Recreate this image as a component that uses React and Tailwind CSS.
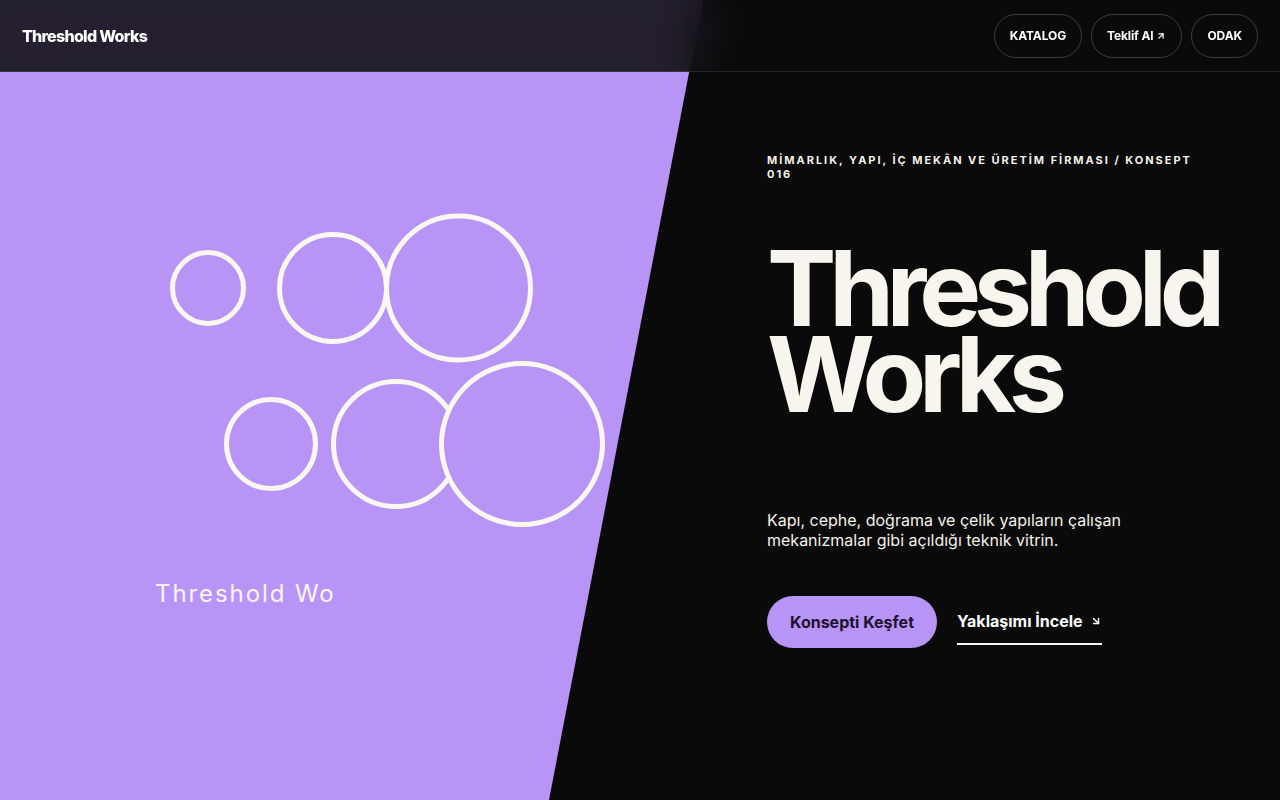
import { ArrowUpRight, ArrowDownRight } from 'lucide-react';

const NAV = [
  { label: 'KATALOG' },
  { label: 'Teklif Al', external: true },
  { label: 'ODAK' },
];

// circle rig: two rows, each ring 125px apart
const RINGS = [
  { cx: 40, cy: 76, r: 35.5 },
  { cx: 165, cy: 76, r: 53.5 },
  { cx: 290.5, cy: 76, r: 72 },
  { cx: 103, cy: 232, r: 44.5 },
  { cx: 228, cy: 232, r: 62.5 },
  { cx: 354, cy: 232, r: 80.5 },
];

function Header() {
  return (
    <header className="absolute inset-x-0 top-0 z-10 flex h-[72px] items-center justify-between border-b border-white/10 bg-[#0a0a0a]/85 px-[22px] backdrop-blur-xl">
      <a className="text-[16px] font-extrabold tracking-[-0.045em] text-white">Threshold Works</a>
      <nav className="flex items-center gap-[9px]">
        {NAV.map((item) => (
          <a
            key={item.label}
            className="flex h-[44px] items-center gap-[3px] rounded-full border border-white/20 px-[15px] text-[12px] font-bold tracking-[-0.01em] text-white"
          >
            {item.label}
            {item.external && <ArrowUpRight className="h-[10px] w-[10px]" strokeWidth={3} />}
          </a>
        ))}
      </nav>
    </header>
  );
}

function RingArt() {
  return (
    <svg width="440" height="320" viewBox="0 0 440 320" className="ml-[168px] block">
      {RINGS.map((c, i) => (
        <circle key={i} cx={c.cx} cy={c.cy} r={c.r} fill="#b794f6" stroke="#fbf7f2" strokeWidth="5" />
      ))}
    </svg>
  );
}

export default function App() {
  return (
    <div className="relative h-[800px] w-full overflow-hidden bg-[#0a0a0a] font-['Inter',sans-serif] antialiased">
      {/* purple slanted panel */}
      <div className="absolute inset-0 bg-[#b794f6] [clip-path:polygon(0_0,703px_0,549px_100%,0_100%)]" />

      <Header />

      <main className="relative grid h-full grid-cols-[767px_1fr]">
        <div className="flex flex-col pt-[212px]">
          <RingArt />
          <p className="ml-[155px] mt-[46px] text-2xl tracking-[0.08em] text-white/90">Threshold Wo</p>
        </div>

        <div className="flex flex-col pt-[153px] pr-[40px]">
          <p className="max-w-[440px] text-[11px] font-bold uppercase leading-[14px] tracking-[0.18em] text-[#f4f1e8]">
            MİMARLIK, YAPI, İÇ MEKÂN VE ÜRETİM FİRMASI / KONSEPT 016
          </p>

          <h1 className="mt-[64px] text-[104px] font-bold leading-[0.83] tracking-[-0.07em] text-[#f7f5ee]">
            Threshold
            <br />
            Works
          </h1>

          <p className="mt-[92px] max-w-md text-[16px] leading-[20px] text-[#f4f1e8]">
            Kapı, cephe, doğrama ve çelik yapıların çalışan mekanizmalar gibi açıldığı teknik vitrin.
          </p>

          <div className="mt-[46px] flex items-center gap-5">
            <a className="rounded-full bg-[#b794f6] px-[23px] py-4 text-[16px] font-bold leading-5 text-[#1d1330]">
              Konsepti Keşfet
            </a>
            <a className="flex items-center gap-[7px] border-b-2 border-[#f5f3ec] py-3 text-[16px] font-bold leading-5 text-white">
              Yaklaşımı İncele
              <ArrowDownRight className="h-[12px] w-[12px]" strokeWidth={3} />
            </a>
          </div>
        </div>
      </main>
    </div>
  );
}
